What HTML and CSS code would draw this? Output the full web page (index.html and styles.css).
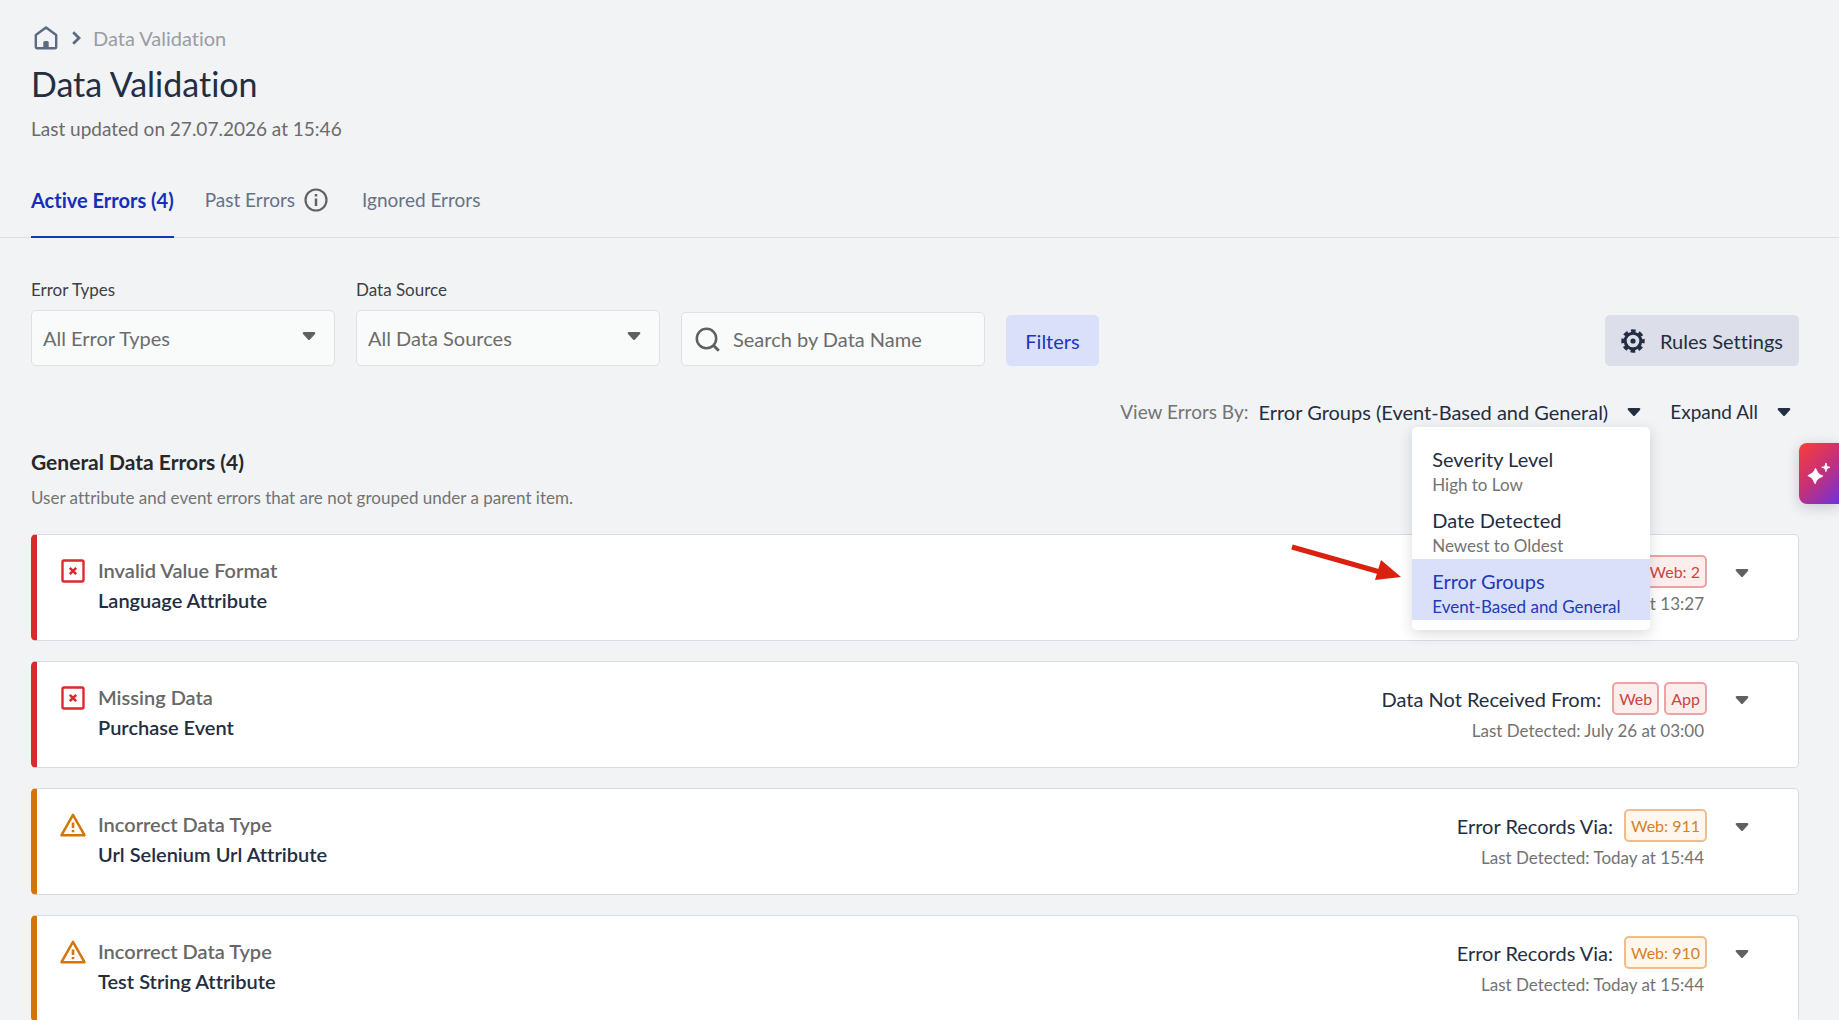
FILE: index.html
```html
<!DOCTYPE html>
<html lang="en">
<head>
<meta charset="utf-8">
<title>Data Validation</title>
<link rel="stylesheet" href="styles.css">
</head>
<body>
<svg class="sprite" aria-hidden="true">
  <symbol id="caret" viewBox="0 0 14 9"><path d="M2 0h10q2 0 1 2L8 7.500q-1 1-2 0L1 2Q0 0 2 0z" fill="currentColor"/></symbol>
  <symbol id="error" viewBox="0 0 24 24"><rect x="1.500" y="1.500" width="21" height="21" rx="1.500" fill="none" stroke="currentColor" stroke-width="2.400"/><path d="M8.800 8.800l6.400 6.400M15.200 8.800l-6.400 6.400" stroke="currentColor" stroke-width="2.600"/></symbol>
  <symbol id="warning" viewBox="0 0 26 24"><path d="M13 1.800L24.500 22.200h-23z" fill="none" stroke="currentColor" stroke-width="2.500" stroke-linejoin="round"/><path d="M13 9.500v5.500M13 17v2.300" stroke="currentColor" stroke-width="2.600"/></symbol>
</svg>

<header class="page-header">
  <nav class="breadcrumb" aria-label="Breadcrumb">
    <a class="home" href="#" aria-label="Home"><svg width="24" height="24" viewBox="0 0 24 24"><path d="M1.800 9L12 1.500 22.200 9v11.800q0 1.400-1.400 1.400H3.200q-1.400 0-1.400-1.400z" fill="none" stroke="currentColor" stroke-width="2.400" stroke-linejoin="round"/><path d="M9.300 22v-5.500q0-1.500 1.500-1.500h2.400q1.500 0 1.500 1.500V22z" fill="currentColor"/></svg></a>
    <svg class="separator" width="9" height="14" viewBox="0 0 9 14"><path d="M1.200 1.300L7 7l-5.800 5.700" fill="none" stroke="currentColor" stroke-width="2.800"/></svg>
    <span>Data Validation</span>
  </nav>
  <h1>Data Validation</h1>
  <p class="updated">Last updated on 27.07.2026 at 15:46</p>
</header>

<nav class="tabs" aria-label="Errors">
  <a class="tab active" href="#">Active Errors (4)</a>
  <a class="tab" href="#">Past Errors <svg class="info" width="24" height="24" viewBox="0 0 24 24"><circle cx="12" cy="12" r="10.500" fill="none" stroke="currentColor" stroke-width="2.200"/><path d="M12 10.500v7.500M12 6v2.600" stroke="currentColor" stroke-width="2.500"/></svg></a>
  <a class="tab" href="#">Ignored Errors</a>
</nav>

<main>
  <form class="filters">
    <div class="field">
      <label for="types">Error Types</label>
      <div class="select-box"><select id="types"><option>All Error Types</option></select><svg class="caret"><use href="#caret"/></svg></div>
    </div>
    <div class="field">
      <label for="source">Data Source</label>
      <div class="select-box"><select id="source"><option>All Data Sources</option></select><svg class="caret"><use href="#caret"/></svg></div>
    </div>
    <div class="search">
      <svg width="25" height="25" viewBox="0 0 25 25"><circle cx="11.500" cy="11.500" r="9.700" fill="none" stroke="currentColor" stroke-width="2.500"/><path d="M18 18l5.800 5.800" stroke="currentColor" stroke-width="2.900"/></svg>
      <input type="search" aria-label="Search by Data Name" placeholder="Search by Data Name">
    </div>
    <button class="button filter-button" type="button">Filters</button>
    <button class="button rules-button" type="button"><svg width="24" height="24" viewBox="0 0 24 24"><circle cx="12" cy="12" r="7.800" fill="none" stroke="currentColor" stroke-width="3"/><circle cx="12" cy="12" r="10" fill="none" stroke="currentColor" stroke-width="3.400" stroke-dasharray="4.600 3.254" stroke-dashoffset="2.300"/><circle cx="12" cy="12" r="2.600" fill="currentColor"/></svg>Rules Settings</button>
  </form>

  <div class="view-bar">
    <span class="view-label">View Errors By:</span>
    <div class="view-menu">
      <button class="text-button" type="button" aria-expanded="true">Error Groups (Event-Based and General)<svg class="caret"><use href="#caret"/></svg></button>
      <div class="menu">
        <button class="menu-item" type="button">Severity Level<small>High to Low</small></button>
        <button class="menu-item" type="button">Date Detected<small>Newest to Oldest</small></button>
        <button class="menu-item selected" type="button">Error Groups<small>Event-Based and General</small></button>
        <svg class="pointer" width="114" height="40" viewBox="0 0 114 40"><path d="M2 4L90 29" stroke="#da200f" stroke-width="5"/><path d="M91 17l20 17-26 3z" fill="#da200f"/></svg>
      </div>
    </div>
    <button class="text-button expand" type="button">Expand All<svg class="caret"><use href="#caret"/></svg></button>
  </div>

  <section>
    <h2>General Data Errors (4)</h2>
    <p class="hint">User attribute and event errors that are not grouped under a parent item.</p>
    <div class="cards">
      <article class="card critical">
        <svg class="status"><use href="#error"/></svg>
        <div class="names"><h3>Invalid Value Format</h3><p>Language Attribute</p></div>
        <div class="details"><div class="origin"><span class="badge">Web: 2</span></div><p>at 13:27</p></div>
        <button class="toggle" type="button" aria-label="Expand"><svg class="caret"><use href="#caret"/></svg></button>
      </article>
      <article class="card critical">
        <svg class="status"><use href="#error"/></svg>
        <div class="names"><h3>Missing Data</h3><p>Purchase Event</p></div>
        <div class="details"><div class="origin">Data Not Received From: <span class="badge">Web</span><span class="badge">App</span></div><p>Last Detected: July 26 at 03:00</p></div>
        <button class="toggle" type="button" aria-label="Expand"><svg class="caret"><use href="#caret"/></svg></button>
      </article>
      <article class="card caution">
        <svg class="status"><use href="#warning"/></svg>
        <div class="names"><h3>Incorrect Data Type</h3><p>Url Selenium Url Attribute</p></div>
        <div class="details"><div class="origin">Error Records Via: <span class="badge">Web: 911</span></div><p>Last Detected: Today at 15:44</p></div>
        <button class="toggle" type="button" aria-label="Expand"><svg class="caret"><use href="#caret"/></svg></button>
      </article>
      <article class="card caution">
        <svg class="status"><use href="#warning"/></svg>
        <div class="names"><h3>Incorrect Data Type</h3><p>Test String Attribute</p></div>
        <div class="details"><div class="origin">Error Records Via: <span class="badge">Web: 910</span></div><p>Last Detected: Today at 15:44</p></div>
        <button class="toggle" type="button" aria-label="Expand"><svg class="caret"><use href="#caret"/></svg></button>
      </article>
    </div>
  </section>
</main>

<button class="assistant" type="button" aria-label="Assistant"><svg width="24" height="24" viewBox="0 0 26 26" fill="#fff"><path d="M9 7c1.500 0 1.500 6.500 8 8-0 1.500-6.500 1.500-8 8.500-1.500 0-1.500-7-8-8.500 0-1.500 6.500-1.500 8-8zM20.500 1c1 4 1 4 4.500 4.700-3.500 1-3.500 1-4.500 4.700-1-3.700-1-3.700-4.500-4.700 3.500-.7 3.500-.7 4.500-4.700z" stroke="#fff" stroke-linejoin="round"/></svg></button>
</body>
</html>
```
FILE: styles.css
```css
* { box-sizing: border-box; }
html { height: 100%; overflow: hidden; }
body {
  height: 100%;
  overflow: hidden;
  margin: 0;
  background: #f1f3f5;
  color: #242e42;
  font: 20px/24px Lato, "Open Sans", sans-serif;
  font-variant-ligatures: none;
}
h1, h2, h3, p { margin: 0; }
button, input, select { font: inherit; font-variant-ligatures: none; color: inherit; }
button { border: 0; background: none; padding: 0; }
svg { flex: none; }
.sprite { position: absolute; width: 0; height: 0; }
.caret { width: 14px; height: 9px; }

.page-header { padding: 26px 31px 0; }
.breadcrumb { display: flex; align-items: center; gap: 12px; color: #9a9da3; }
.home { display: flex; margin-left: 3px; margin-right: 2px; color: #5d6a84; }
.separator { color: #5d6a84; }
h1 { margin-top: 13px; font-size: 34px; line-height: 42px; font-weight: 400; }
.updated { margin-top: 12px; font-size: 19px; color: #6b6b6b; }

.tabs { display: flex; gap: 31px; margin-top: 39px; padding: 0 31px; border-bottom: 1px solid #dcdfe5; }
.tab {
  display: flex;
  align-items: center;
  gap: 9px;
  height: 58px;
  padding-bottom: 19px;
  margin-bottom: -1px;
  color: #66728a;
  text-decoration: none;
}
.tab:not(.active) { font-size: 19px; }
.tab.active { border-bottom: 2px solid #1338be; padding-bottom: 17px; color: #1430b8; font-weight: 700; }
.info { color: #626262; margin-right: 3px; }

main { padding: 41px 40px 0 31px; }
.filters { display: flex; align-items: flex-end; gap: 21px; }
.field { width: 304px; }
.field label { display: block; margin-bottom: 9px; font-size: 17px; line-height: 22px; color: #3e4043; }
.select-box { position: relative; display: flex; }
.select-box select {
  appearance: none;
  width: 100%;
  height: 56px;
  padding: 0 11px;
  border: 1px solid #dfe1e3;
  border-radius: 5px;
  background: #f9fafa;
  color: #6c6c6c;
}
.select-box .caret { position: absolute; right: 19px; top: 22px; color: #606060; }
.search {
  display: flex;
  align-items: center;
  gap: 13px;
  width: 304px;
  height: 54px;
  padding: 0 13px;
  border: 1px solid #dfe1e3;
  border-radius: 5px;
  background: #f9fafa;
  color: #606060;
}
.search input { flex: 1; min-width: 0; border: 0; padding: 0; background: none; outline: 0; }
.search input::placeholder { color: #6c6c6c; opacity: 1; }
.button { height: 51px; border-radius: 5px; }
.filter-button { width: 93px; background: #dae0fa; color: #1a37bd; }
.rules-button { display: flex; align-items: center; justify-content: center; gap: 15px; width: 194px; margin-left: auto; background: #dcdfe9; }

.view-bar { display: flex; justify-content: flex-end; align-items: center; margin-top: 34px; padding-right: 8px; }
.view-label { margin-right: 10px; font-size: 19px; color: #747474; }
.view-menu { position: relative; }
.text-button { display: flex; align-items: center; gap: 19px; }
.expand { margin-left: 29px; font-size: 19px; }
.menu {
  position: absolute;
  z-index: 2;
  top: 27px;
  right: -9px;
  width: 238px;
  padding: 10px 0;
  border-radius: 5px;
  background: #fff;
  box-shadow: 0 4px 14px rgba(30, 35, 50, .16);
}
.menu-item { display: block; width: 100%; height: 61px; padding: 8px 20px 0; text-align: left; }
.menu-item small { display: block; margin-top: 2px; font-size: 17px; line-height: 24px; color: #737373; }
.menu-item.selected { background: #dae0fa; color: #1f3ab7; }
.menu-item.selected small { color: #1f3ab7; }
.pointer { position: absolute; right: 246px; top: 116px; }

h2 { margin-top: 26px; font-size: 21px; line-height: 24px; font-weight: 700; color: #26282c; }
.hint { margin-top: 12px; font-size: 17px; line-height: 24px; color: #737373; }
.cards { display: flex; flex-direction: column; gap: 20px; margin-top: 24px; }
.card {
  display: flex;
  align-items: flex-start;
  height: 107px;
  padding: 20px 49px 0 23px;
  border: 1px solid #d8dce5;
  border-left: 6px solid var(--accent);
  border-radius: 5px;
  background: #fff;
}
.critical { --accent: #d92b2e; --tint: #fdeeee; --edge: #eba3a3; --ink: #cc4440; }
.caution { --accent: #d47508; --tint: #fff6ee; --edge: #f0bd8a; --ink: #d38228; }
.status { width: 26px; height: 24px; margin-top: 4px; color: var(--accent); }
.names { margin-left: 12px; line-height: 30px; font-weight: 600; }
.names h3 { font: inherit; color: #686868; }
.details { margin-left: auto; text-align: right; }
.origin { display: flex; align-items: center; justify-content: flex-end; }
.badge { margin-left: 5px; padding: 0 5px; border: 2px solid var(--edge); border-radius: 5px; background: var(--tint); color: var(--ink); font-size: 16px; line-height: 29px; }
.badge:first-of-type { margin-left: 11px; }
.details p { margin: 4px 3px 0 0; font-size: 17px; line-height: 24px; color: #737373; }
.toggle { display: flex; margin: 14px 0 0 28px; color: #606060; }

.assistant {
  position: absolute;
  top: 443px;
  right: 0;
  display: flex;
  align-items: center;
  justify-content: center;
  width: 40px;
  height: 61px;
  border-radius: 8px 0 0 8px;
  background: linear-gradient(135deg, #ef3b45 10%, #c53176 50%, #7631d4 95%);
  box-shadow: 0 3px 14px rgba(30, 35, 50, .2);
}
```
